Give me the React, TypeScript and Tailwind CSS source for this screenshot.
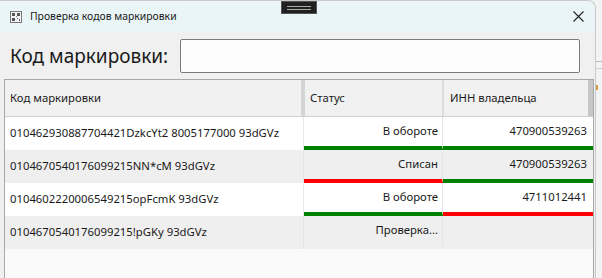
import React from "react";

type Mark = "ok" | "bad" | null;

const rows: { code: string; status: string; inn: string; s: Mark; i: Mark }[] = [
  { code: "010462930887704421DzkcYt2 8005177000 93dGVz", status: "В обороте", inn: "470900539263", s: "ok", i: "ok" },
  { code: "0104670540176099215NN*cM 93dGVz", status: "Списан", inn: "470900539263", s: "bad", i: "ok" },
  { code: "0104602220006549215opFcmK 93dGVz", status: "В обороте", inn: "4711012441", s: "ok", i: "bad" },
  { code: "0104670540176099215!pGKy 93dGVz", status: "Проверка...", inn: "", s: null, i: null },
];

const barClass = (m: Mark) =>
  m === "ok" ? "border-b-4 border-b-[#008000]" : m === "bad" ? "border-b-4 border-b-[#ff0000]" : "border-b-4 border-b-transparent";

function TitleIcon() {
  return (
    <svg width="12" height="12" viewBox="0 0 12 12" className="shrink-0">
      <rect x="0.5" y="0.5" width="11" height="11" fill="#f4f4f4" stroke="#777" />
      <rect x="2" y="2" width="3" height="3" fill="#555" />
      <rect x="7" y="2" width="3" height="3" fill="#555" />
      <rect x="2" y="7" width="3" height="3" fill="#555" />
      <rect x="7" y="7" width="1" height="1" fill="#555" />
      <rect x="9" y="8" width="1" height="2" fill="#555" />
      <rect x="6" y="5" width="1" height="1" fill="#777" />
    </svg>
  );
}

export default function App() {
  return (
    <div className="flex h-[278px] w-[602px] overflow-hidden bg-[#f4f4f4] text-[#1a1a1a]" style={{ fontFamily: '"Noto Sans", "Open Sans", sans-serif' }}>
      <div className="relative flex w-[596px] shrink-0 flex-col overflow-hidden rounded-tr-[8px] border-r border-t border-[#c9c9c9] bg-[#f0f0f0]">
        <div className="absolute left-[281px] top-0 flex h-[13px] w-[36px] flex-col items-center justify-center gap-[2px] border border-[#555] bg-[#202020]">
          <div className="h-px w-[24px] bg-[#aaa]" />
          <div className="h-px w-[24px] bg-[#aaa]" />
        </div>
        <div className="flex h-[31px] shrink-0 items-center bg-[#e9f5f7] pl-[10px] pr-[8px]">
          <TitleIcon />
          <span className="ml-[8px] text-[10.4px]">Проверка кодов маркировки</span>
          <svg width="11" height="11" viewBox="0 0 11 11" className="ml-auto mr-[3px]">
            <path d="M0.5 0.5L10.5 10.5M10.5 0.5L0.5 10.5" stroke="#222" strokeWidth="1.1" />
          </svg>
        </div>
        <div className="flex items-center pl-[10px] pt-[7px]">
          <span className="w-[170px] text-[19px] leading-[34px]">Код маркировки:</span>
          <div className="h-[34px] w-[400px] rounded-[2px] border border-[#7a7a7a] bg-[#fcfcfc]" />
        </div>
        <div className="ml-[4px] mt-[6px] flex w-[590px] flex-1 flex-col border-l border-r border-t border-[#a8a8a8] bg-[#fafafa] text-[11.3px]">
          <div className="flex h-[37px] shrink-0 border-b border-[#d0d0d0] bg-[#f1f1f1] text-[11.3px]">
            <div className="flex w-[296px] items-center pl-[5px]">Код маркировки</div>
            <div className="w-[4px] bg-[#d4d4d4]" />
            <div className="flex w-[137px] items-center pl-[5px]">Статус</div>
            <div className="w-[2px] bg-[#dcdcdc]" />
            <div className="flex w-[144px] items-center pl-[6px]">ИНН владельца</div>
            <div className="w-[5px] bg-[#c6c6c6]" />
          </div>
          {rows.map((r, k) => (
            <div key={k} className={`flex h-[33px] shrink-0 ${k % 2 ? "bg-[#efefef]" : "bg-white"}`}>
              <div className="flex w-[299px] items-center border-r border-[#e6e6e6] pl-[5px]">{r.code}</div>
              <div className={`flex w-[139px] items-center justify-end border-r border-r-[#e6e6e6] pr-[4px] ${barClass(r.s)}`}>{r.status}</div>
              <div className={`flex w-[150px] items-center justify-end pr-[6px] ${barClass(r.i)}`}>{r.inn}</div>
            </div>
          ))}
        </div>
      </div>
      <div className="flex flex-1 flex-col bg-[#f3f3f3]">
        <div className="mt-[61px] h-px bg-[#bbb]" />
        <div className="mt-[6px] h-px bg-[#ccc]" />
        <div className="mt-[16px] h-[5px] w-[2px] bg-[#d59a3a]" />
      </div>
    </div>
  );
}
